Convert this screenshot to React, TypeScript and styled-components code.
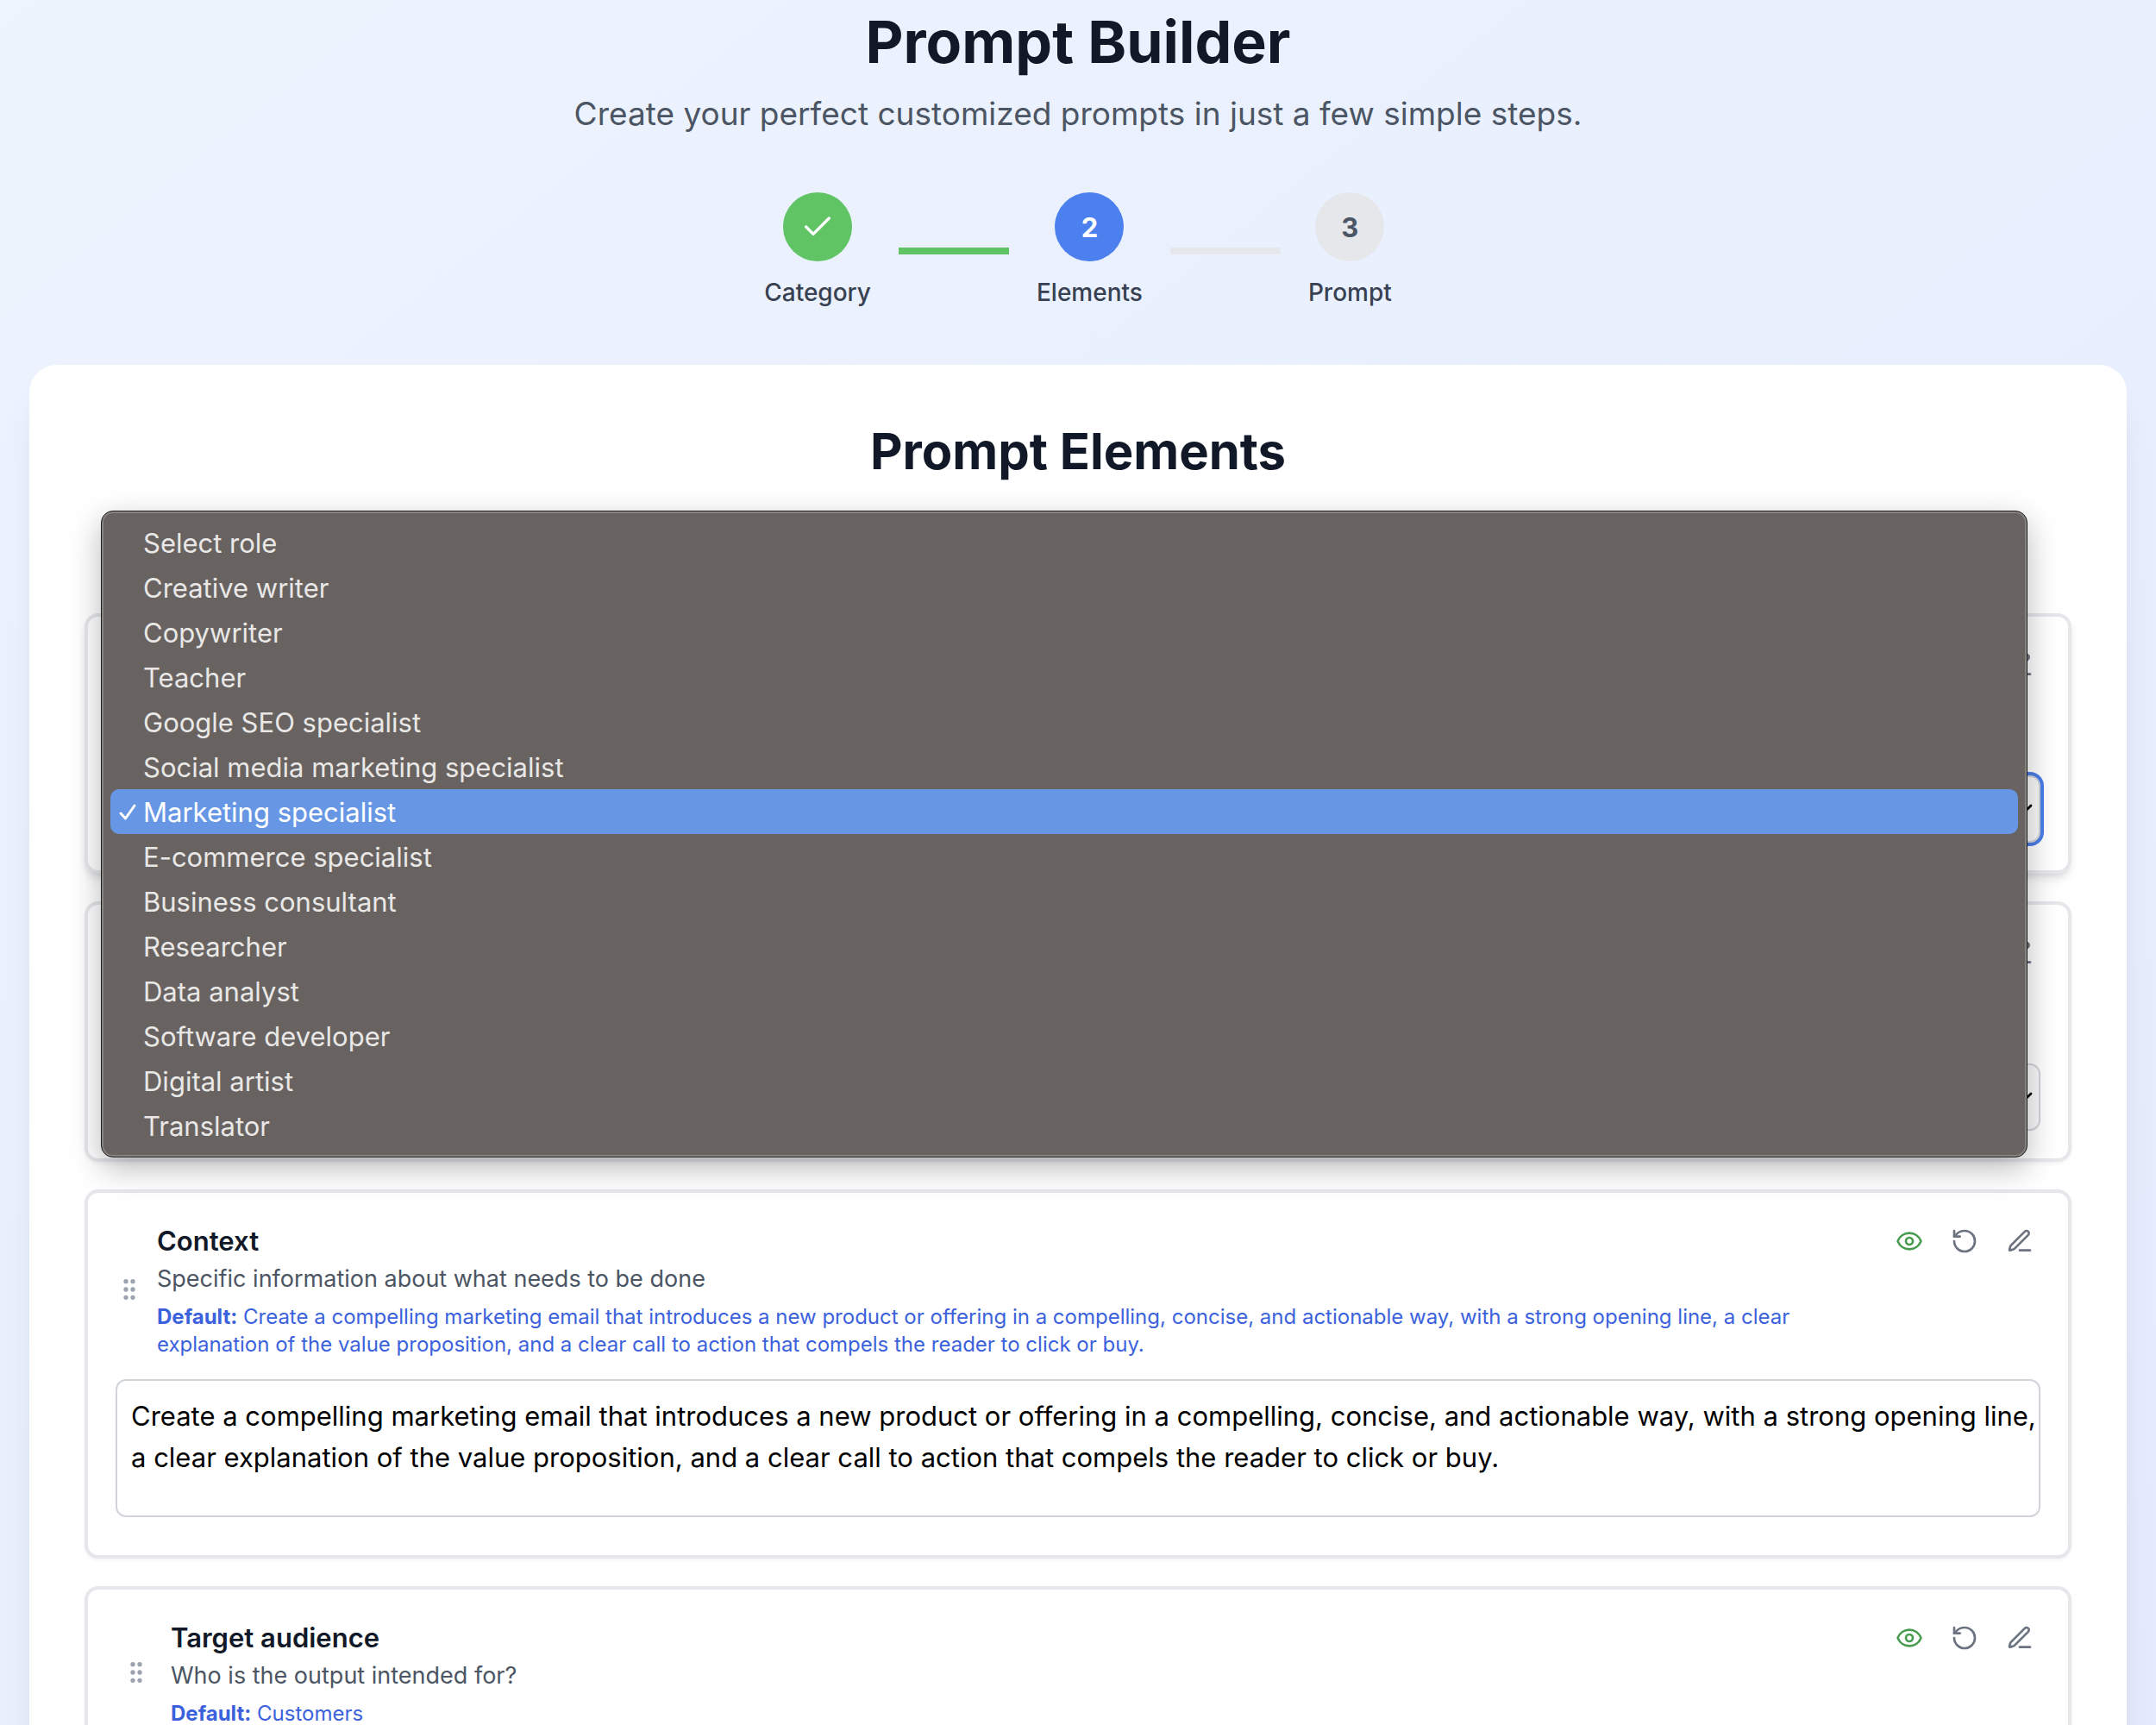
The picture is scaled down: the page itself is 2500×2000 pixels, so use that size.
import React, { useState } from 'react';
import styled, { createGlobalStyle, css } from 'styled-components';
import { Check, ChevronDown, Eye, GripVertical, RotateCcw } from 'lucide-react';

const GlobalStyle = createGlobalStyle`
  *, *::before, *::after { box-sizing: border-box; }
  body { margin: 0; }
  body, button, select, textarea, input {
    font-family: Inter, "Liberation Sans", sans-serif;
  }
  h1, h2, h3, p, ul, ol { margin: 0; padding: 0; }
  ul, ol { list-style: none; }
`;

const Page = styled.main`
  height: 100vh;
  overflow-y: auto;
  scrollbar-width: none;
  padding: 8px 34px 0;
  background: linear-gradient(to bottom right, #edf4fe, #e5ebfd);
  color: #111827;
`;

const Hero = styled.header`
  text-align: center;
`;

const PageTitle = styled.h1`
  font-size: 68px;
  line-height: 80px;
  font-weight: 700;
  margin-bottom: 16px;
`;

const Subtitle = styled.p`
  font-size: 37px;
  line-height: 56px;
  color: #4b5563;
`;

const Steps = styled.ol`
  display: flex;
  justify-content: center;
  align-items: center;
  gap: 32px;
  margin: 63px 0 64px;
`;

const Step = styled.li`
  display: flex;
  flex-direction: column;
  align-items: center;
  gap: 16px;
`;

type StepState = 'done' | 'current' | 'todo';

const stepColors: Record<StepState, string> = {
  done: '#60c465',
  current: '#4b80ee',
  todo: '#e5e7eb',
};

const StepCircle = styled.span<{ $state: StepState }>`
  display: grid;
  place-items: center;
  width: 80px;
  height: 80px;
  border-radius: 50%;
  background: ${(p) => stepColors[p.$state]};
  color: ${(p) => (p.$state === 'todo' ? '#4b5563' : '#ffffff')};
  font-size: 31px;
  font-weight: 700;
`;

const StepLabel = styled.span`
  font-size: 28px;
  line-height: 40px;
  font-weight: 500;
  color: #374151;
`;

const StepLine = styled.li<{ $state: StepState }>`
  width: 128px;
  height: 8px;
  background: ${(p) => stepColors[p.$state]};
`;

const Card = styled.section`
  padding: 64px;
  border-radius: 32px;
  background: #ffffff;
  box-shadow: 0 40px 50px -10px rgba(0, 0, 0, 0.08), 0 16px 20px -12px rgba(0, 0, 0, 0.08);
`;

const CardTitle = styled.h2`
  text-align: center;
  font-size: 58px;
  line-height: 72px;
  font-weight: 700;
  margin-bottom: 152px;
`;

const ElementList = styled.div`
  display: flex;
  flex-direction: column;
  gap: 32px;
`;

const ElementCard = styled.article<{ $raised?: boolean }>`
  position: relative;
  padding: 32px;
  border: 4px solid #e5e7eb;
  border-radius: 16px;
  background: #ffffff;
  box-shadow: ${(p) =>
    p.$raised
      ? '0 8px 12px -2px rgba(0, 0, 0, 0.1), 0 4px 8px -4px rgba(0, 0, 0, 0.1)'
      : '0 2px 4px rgba(0, 0, 0, 0.05)'};
`;

const ElementHeader = styled.div`
  display: flex;
  justify-content: space-between;
  align-items: flex-start;
  gap: 16px;
  min-height: 128px;
  margin-bottom: 24px;
`;

const ElementInfo = styled.div`
  display: flex;
  align-items: center;
  gap: 16px;
`;

const iconButton = css`
  display: flex;
  border: 0;
  background: none;
  cursor: pointer;
`;

const Handle = styled.button<{ $tight?: boolean }>`
  ${iconButton}
  padding: ${(p) => (p.$tight ? 0 : 8)}px;
  color: #9ca3af;
  cursor: grab;
`;

const ElementTitle = styled.h3`
  font-size: 31px;
  line-height: 48px;
  font-weight: 600;
`;

const Description = styled.p`
  font-size: 27px;
  line-height: 40px;
  color: #4b5563;
`;

const DefaultText = styled.p`
  margin-top: 8px;
  font-size: 24px;
  line-height: 32px;
  color: #3b62dc;
`;

const Actions = styled.div`
  display: flex;
  gap: 16px;
`;

const ActionButton = styled.button<{ $active?: boolean }>`
  ${iconButton}
  padding: 8px;
  color: ${(p) => (p.$active ? '#489c50' : '#6b7280')};
`;

const TextArea = styled.textarea`
  display: block;
  width: 100%;
  height: 160px;
  margin-bottom: 12px;
  padding: 17px 2px 16px 16px;
  border: 2px solid #d1d5db;
  border-radius: 12px;
  resize: none;
  font-size: 31px;
  line-height: 48px;
  color: #000000;
`;

const SelectWrap = styled.div`
  position: relative;
`;

const Select = styled.select<{ $open?: boolean }>`
  display: block;
  appearance: none;
  width: 100%;
  height: 78px;
  padding: 0 16px;
  border: 2px solid #d1d5db;
  border-radius: 12px;
  background: #fafafa;
  font-size: 31px;
  color: #000000;
  box-shadow: ${(p) => (p.$open ? '0 0 0 4px #4b7ee8' : 'none')};
`;

const SelectArrow = styled(ChevronDown)`
  position: absolute;
  right: 3px;
  top: 23px;
  color: #000000;
  pointer-events: none;
`;

const Menu = styled.ul`
  position: absolute;
  z-index: 2;
  top: -307px;
  left: -17px;
  right: 15px;
  padding: 10px;
  border: 1px solid #1f1e1d;
  border-radius: 14px;
  background: #686360;
  box-shadow: inset 0 0 0 2px #868380, 0 12px 36px rgba(0, 0, 0, 0.28);
  color: #e9e8e7;
`;

const MenuItem = styled.li<{ $selected: boolean }>`
  display: flex;
  align-items: center;
  height: 52px;
  padding-left: 8px;
  border-radius: 10px;
  font-size: 31px;
  background: ${(p) => (p.$selected ? '#6797e4' : 'transparent')};
  color: ${(p) => (p.$selected ? '#ffffff' : 'inherit')};
`;

const MenuMark = styled.span`
  display: flex;
  width: 30px;
`;

const roles = [
  'Select role',
  'Creative writer',
  'Copywriter',
  'Teacher',
  'Google SEO specialist',
  'Social media marketing specialist',
  'Marketing specialist',
  'E-commerce specialist',
  'Business consultant',
  'Researcher',
  'Data analyst',
  'Software developer',
  'Digital artist',
  'Translator',
];

const contextText =
  'Create a compelling marketing email that introduces a new product or offering in a compelling, concise, and actionable way, with a strong opening line, a clear explanation of the value proposition, and a clear call to action that compels the reader to click or buy.';

function PenIcon() {
  return (
    <svg
      width="32"
      height="32"
      viewBox="0 0 24 24"
      fill="none"
      stroke="currentColor"
      strokeWidth="2"
      strokeLinecap="round"
      strokeLinejoin="round"
      aria-hidden
    >
      <path d="M12 20h9" />
      <path d="M16.376 3.622a1 1 0 0 1 3.002 3.002L7.368 18.635a2 2 0 0 1-.855.506l-2.872.838a.5.5 0 0 1-.62-.62l.838-2.872a2 2 0 0 1 .506-.854z" />
    </svg>
  );
}

function MenuCheck() {
  return (
    <svg
      width="24"
      height="24"
      viewBox="0 0 24 24"
      fill="none"
      stroke="currentColor"
      strokeWidth="3"
      strokeLinecap="round"
      strokeLinejoin="round"
      aria-hidden
    >
      <path d="M4 14l5.500 6L20 5" />
    </svg>
  );
}

function ElementActions() {
  return (
    <Actions>
      <ActionButton type="button" aria-label="Toggle visibility" $active>
        <Eye size={32} />
      </ActionButton>
      <ActionButton type="button" aria-label="Reset">
        <RotateCcw size={32} />
      </ActionButton>
      <ActionButton type="button" aria-label="Edit">
        <PenIcon />
      </ActionButton>
    </Actions>
  );
}

interface HeaderProps {
  title?: string;
  description?: string;
  defaultValue?: string;
  tight?: boolean;
}

function Header({ title, description, defaultValue, tight }: HeaderProps) {
  return (
    <ElementHeader>
      <ElementInfo>
        {title && (
          <>
            <Handle type="button" aria-label="Reorder" $tight={tight}>
              <GripVertical size={32} />
            </Handle>
            <div>
              <ElementTitle>{title}</ElementTitle>
              <Description>{description}</Description>
              <DefaultText>
                <strong>Default:</strong> {defaultValue}
              </DefaultText>
            </div>
          </>
        )}
      </ElementInfo>
      <ElementActions />
    </ElementHeader>
  );
}

export default function App() {
  const [role, setRole] = useState('Marketing specialist');
  const [context, setContext] = useState(contextText);
  const [audience, setAudience] = useState('Customers');

  return (
    <>
      <GlobalStyle />
      <Page>
        <Hero>
          <PageTitle>Prompt Builder</PageTitle>
          <Subtitle>Create your perfect customized prompts in just a few simple steps.</Subtitle>
        </Hero>
        <Steps>
          <Step>
            <StepCircle $state="done">
              <Check size={40} strokeWidth={2} />
            </StepCircle>
            <StepLabel>Category</StepLabel>
          </Step>
          <StepLine $state="done" aria-hidden />
          <Step aria-current="step">
            <StepCircle $state="current">2</StepCircle>
            <StepLabel>Elements</StepLabel>
          </Step>
          <StepLine $state="todo" aria-hidden />
          <Step>
            <StepCircle $state="todo">3</StepCircle>
            <StepLabel>Prompt</StepLabel>
          </Step>
        </Steps>
        <Card>
          <CardTitle>Prompt Elements</CardTitle>
          <ElementList>
            <ElementCard $raised>
              <Header />
              <SelectWrap>
                <Select $open aria-label="Role" value={role} onChange={(e) => setRole(e.target.value)}>
                  {roles.map((name) => (
                    <option key={name}>{name}</option>
                  ))}
                </Select>
                <SelectArrow size={32} />
                <Menu role="listbox" aria-label="Role">
                  {roles.map((name) => (
                    <MenuItem
                      key={name}
                      role="option"
                      aria-selected={name === role}
                      $selected={name === role}
                      onClick={() => setRole(name)}
                    >
                      <MenuMark>{name === role && <MenuCheck />}</MenuMark>
                      {name}
                    </MenuItem>
                  ))}
                </Menu>
              </SelectWrap>
            </ElementCard>
            <ElementCard>
              <Header />
              <SelectWrap>
                <Select aria-label="Option" />
                <SelectArrow size={32} />
              </SelectWrap>
            </ElementCard>
            <ElementCard>
              <Header
                title="Context"
                description="Specific information about what needs to be done"
                defaultValue={contextText}
                tight
              />
              <TextArea
                aria-label="Context"
                value={context}
                onChange={(e) => setContext(e.target.value)}
              />
            </ElementCard>
            <ElementCard>
              <Header
                title="Target audience"
                description="Who is the output intended for?"
                defaultValue="Customers"
              />
              <TextArea
                aria-label="Target audience"
                value={audience}
                onChange={(e) => setAudience(e.target.value)}
              />
            </ElementCard>
          </ElementList>
        </Card>
      </Page>
    </>
  );
}
